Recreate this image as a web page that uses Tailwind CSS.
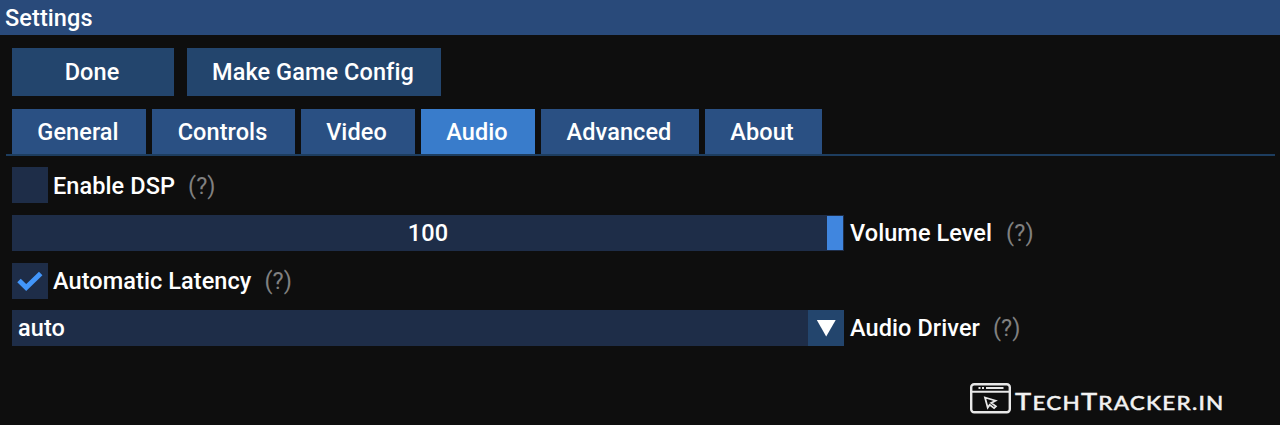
<!DOCTYPE html>
<html lang="en">
<head>
<meta charset="utf-8">
<title>Settings</title>
<script src="https://cdn.jsdelivr.net/npm/@tailwindcss/browser@4"></script>
</head>
<body class="bg-[#0e0e0e]">
<div class="relative flex h-[425px] w-[1280px] flex-col overflow-hidden bg-[#0e0e0e] font-['Roboto',sans-serif] text-[23.5px] leading-[36px] font-medium tracking-[0.08px] whitespace-nowrap text-white">
  <header class="flex h-[35px] shrink-0 items-center bg-[#294a7a] pl-[5px]"><span>Settings</span></header>
  <div class="mt-[12.500px] ml-3 flex h-[48.500px] shrink-0 gap-[13px]">
    <button class="w-[162px] bg-[#23456d] pr-[2px]">Done</button>
    <button class="w-[254px] bg-[#23456d] pr-[2px]">Make Game Config</button>
  </div>
  <nav class="mt-[13px] mr-[5px] ml-[6px] flex h-[47px] shrink-0 gap-[6px] border-b-2 border-[#1d3d5f] pl-[6px]">
    <button class="w-[134px] bg-[#2a5083] pr-[2px]">General</button>
    <button class="w-[143px] bg-[#2a5083] pr-[2px]">Controls</button>
    <button class="w-[114px] bg-[#2a5083] pr-[3px]">Video</button>
    <button class="w-[114px] bg-[#397ccb] pr-[2px]">Audio</button>
    <button class="w-[158px] bg-[#2a5083] pr-[2px]">Advanced</button>
    <button class="w-[117px] bg-[#2a5083] pr-[3px]">About</button>
  </nav>
  <main class="mt-[11px] ml-3 flex flex-col gap-[11.700px]">
    <div class="flex h-9 items-center">
      <span class="size-9 bg-[#1e2d48]"></span>
      <span class="mt-px ml-[5px]">Enable DSP</span>
      <span class="mt-px ml-[13px] font-normal text-[#808080]">(?)</span>
    </div>
    <div class="flex h-9 items-center">
      <div class="relative h-9 w-[832px] bg-[#1e2d48] text-center">100<span class="absolute top-px right-px h-[34px] w-4 bg-[#4086df]"></span></div>
      <span class="ml-[6px]">Volume Level</span>
      <span class="ml-[14px] font-normal text-[#808080]">(?)</span>
    </div>
    <div class="mt-[0.600px] flex h-9 items-center">
      <span class="size-9 bg-[#1e2d48]"><svg class="size-9" viewBox="0 0 36 36" fill="none" stroke="#4296fa" stroke-width="5"><path d="M7 17.500l7.200 7L28.700 10.500"/></svg></span>
      <span class="ml-[5px]">Automatic Latency</span>
      <span class="ml-[13px] font-normal text-[#808080]">(?)</span>
    </div>
    <div class="-mt-[0.600px] flex h-9 items-center">
      <div class="flex h-9 w-[832px] justify-between bg-[#1e2d48] pl-[6px]"><span>auto</span><span class="size-9 bg-[#23456d]"><svg class="size-9" viewBox="0 0 36 36" fill="#fff"><path d="M8.800 10h18.900L18.200 26.500z"/></svg></span></div>
      <span class="ml-[6px]">Audio Driver</span>
      <span class="ml-[13px] font-normal text-[#808080]">(?)</span>
    </div>
  </main>
  <div class="absolute top-[382px] left-[969px] flex items-start font-['Lato',sans-serif] leading-[32px] text-[#f2f2f2]">
    <svg class="h-8 w-[43px]" viewBox="0 0 43 32" fill="none" stroke="#e8e8e8" stroke-width="2.400">
      <rect x="2.200" y="2.200" width="38.600" height="28" rx="3"/>
      <path d="M2 9.800h39" stroke-width="2"/>
      <path d="M9.500 6h2M13 6h2M17 6h17.500" stroke-width="2"/>
      <path d="M16 15.500l10.500 3.200-4.300 2.200 4.700 3.400-1.800 1.800-4.400-3.400-2 3z" stroke-width="1.800"/>
    </svg>
    <span class="mt-[3px] ml-[3px] origin-left scale-x-[1.187] text-[23px] tracking-[1px] [-webkit-text-stroke:0.4px_#f2f2f2]">T<span class="text-[19px]">ECH</span>T<span class="text-[19px]">RACKER.IN</span></span>
  </div>
</div>
</body>
</html>
